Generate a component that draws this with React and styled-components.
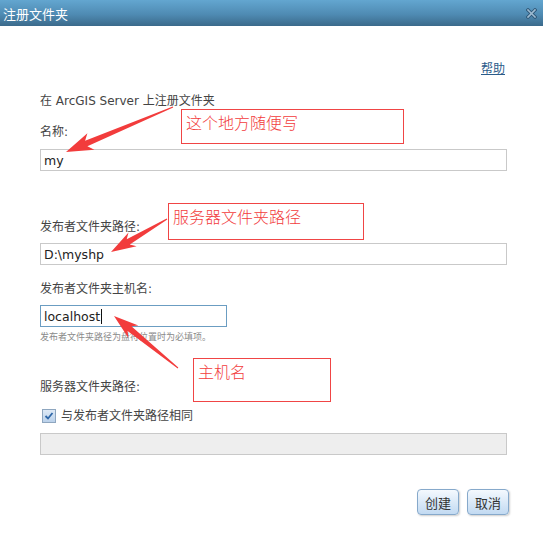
import styled, { createGlobalStyle } from "styled-components";

const GlobalStyle = createGlobalStyle`
  body {
    margin: 0;
    background: #fff;
    font-family: "DejaVu Sans", "Noto Sans CJK SC", sans-serif;
  }
`;

const Dialog = styled.div`
  position: relative;
  width: 543px;
  height: 544px;
  overflow: hidden;
  background: #fff;
`;

const TitleBar = styled.div`
  height: 26px;
  display: flex;
  align-items: center;
  justify-content: space-between;
  padding: 0 6px 0 3px;
  background: linear-gradient(#63a6d0, #4f8bb3 55%, #3b6a8b);
  color: #fff;
  font-size: 13px;
  font-family: "Noto Sans CJK SC", sans-serif;
`;

const Body = styled.div`
  display: flex;
  flex-direction: column;
  padding: 0 36px 0 40px;
`;

const HelpRow = styled.div`
  margin-top: 35px;
  display: flex;
  justify-content: flex-end;
  padding-right: 2px;
  line-height: 16px;
`;

const HelpLink = styled.a`
  font-size: 12px;
  color: #2b5c8a;
  text-decoration: underline;
`;

const Label = styled.div`
  margin-top: ${(p) => p.$top}px;
  font-size: 12px;
  line-height: 16px;
  color: #444;
`;

const Field = styled.div`
  margin-top: ${(p) => p.$top}px;
  width: ${(p) => p.$width || "100%"};
  height: 22px;
  box-sizing: border-box;
  border: 1px solid ${(p) => (p.$focused ? "#6b9dc2" : "#c9c9c9")};
  background: ${(p) => (p.$disabled ? "#eeeeee" : "#fff")};
  padding: 0 3px;
  display: flex;
  align-items: center;
  font-size: 12.5px;
  color: #222;
`;

const Caret = styled.span`
  width: 1px;
  height: 15px;
  margin-left: 1px;
  background: #111;
`;

const Hint = styled.div`
  margin-top: 4px;
  font-size: 9px;
  line-height: 12px;
  color: #8a8a8a;
`;

const CheckRow = styled.div`
  margin-top: 13px;
  display: flex;
  align-items: center;
  gap: 5px;
  padding-left: 2px;
  font-size: 12px;
  line-height: 16px;
  color: #444;
`;

const ButtonRow = styled.div`
  margin-top: 34px;
  display: flex;
  justify-content: flex-end;
  gap: 8px;
  margin-right: -2px;
`;

const Button = styled.button`
  width: 42px;
  height: 26px;
  border: 1px solid #86a9cb;
  border-radius: 4px;
  background: linear-gradient(#f4f9fe, #c2daf2);
  box-shadow: 1px 1px 2px rgba(0, 0, 0, 0.2);
  font-family: "Noto Sans CJK SC", sans-serif;
  font-size: 13px;
  color: #333;
  padding: 0;
`;

const Note = styled.div`
  position: absolute;
  left: ${(p) => p.$x}px;
  top: ${(p) => p.$y}px;
  width: ${(p) => p.$w}px;
  height: ${(p) => p.$h}px;
  box-sizing: border-box;
  border: 1px solid #f04545;
  padding: 2px 4px 0;
  color: #f23c3c;
  font-family: "Noto Sans CJK SC", sans-serif;
  font-weight: 300;
  font-size: 16px;
  line-height: 20px;
`;

const Overlay = styled.svg`
  position: absolute;
  left: 0;
  top: 0;
  pointer-events: none;
`;

const arrowPoints = ([tx, ty], [px, py], len, half) => {
  const dx = px - tx;
  const dy = py - ty;
  const d = Math.hypot(dx, dy);
  const ux = dx / d;
  const uy = dy / d;
  const nx = -uy;
  const ny = ux;
  const nk = [px - ux * len, py - uy * len];
  const bk = [px - ux * (len + 5), py - uy * (len + 5)];
  const pts = [
    [tx + nx * 0.5, ty + ny * 0.5],
    [nk[0] + nx * 3, nk[1] + ny * 3],
    [bk[0] + nx * half, bk[1] + ny * half],
    [px, py],
    [bk[0] - nx * half, bk[1] - ny * half],
    [nk[0] - nx * 3, nk[1] - ny * 3],
    [tx - nx * 0.5, ty - ny * 0.5],
  ];
  return pts.map((p) => p.map((v) => v.toFixed(1)).join(",")).join(" ");
};

const Arrows = () => (
  <Overlay width="543" height="544">
    <polygon points={arrowPoints([173, 107], [66, 152], 22, 9)} fill="#f23c3c" />
    <polygon points={arrowPoints([167, 219], [111, 252], 20, 8)} fill="#f23c3c" />
    <polygon points={arrowPoints([178, 368], [114, 316], 20, 8)} fill="#f23c3c" />
  </Overlay>
);

const CloseIcon = () => (
  <svg width="11" height="11" viewBox="0 0 11 11">
    <path d="M2 2 L9 9 M9 2 L2 9" stroke="#2f5878" strokeWidth="3.4" strokeLinecap="square" />
    <path d="M2 2 L9 9 M9 2 L2 9" stroke="#9dbbd2" strokeWidth="1.6" strokeLinecap="square" />
  </svg>
);

const CheckBox = () => (
  <svg width="14" height="14" viewBox="0 0 14 14">
    <defs>
      <linearGradient id="cb" x1="0" y1="0" x2="0" y2="1">
        <stop offset="0" stopColor="#dfeaf6" />
        <stop offset="1" stopColor="#b9d0ea" />
      </linearGradient>
    </defs>
    <rect x="0.5" y="0.5" width="13" height="13" fill="url(#cb)" stroke="#8ea6bf" />
    <path d="M3.5 7 L6 9.5 L10.5 4" fill="none" stroke="#2f67a8" strokeWidth="1.8" />
  </svg>
);

export default function App() {
  return (
    <>
      <GlobalStyle />
      <Dialog>
        <TitleBar>
          <span>注册文件夹</span>
          <CloseIcon />
        </TitleBar>
        <Body>
          <HelpRow>
            <HelpLink>帮助</HelpLink>
          </HelpRow>
          <Label $top={16}>在 ArcGIS Server 上注册文件夹</Label>
          <Label $top={15}>名称:</Label>
          <Field $top={9}>my</Field>
          <Label $top={48}>发布者文件夹路径:</Label>
          <Field $top={8}>D:\myshp</Field>
          <Label $top={16}>发布者文件夹主机名:</Label>
          <Field $top={8} $width="187px" $focused>
            localhost
            <Caret />
          </Field>
          <Hint>发布者文件夹路径为盘符位置时为必填项。</Hint>
          <Label $top={36}>服务器文件夹路径:</Label>
          <CheckRow>
            <CheckBox />
            与发布者文件夹路径相同
          </CheckRow>
          <Field $top={9} $disabled />
          <ButtonRow>
            <Button>创建</Button>
            <Button>取消</Button>
          </ButtonRow>
        </Body>
        <Note $x={181} $y={109} $w={223} $h={35}>这个地方随便写</Note>
        <Note $x={168} $y={203} $w={196} $h={37}>服务器文件夹路径</Note>
        <Note $x={193} $y={358} $w={138} $h={44}>主机名</Note>
        <Arrows />
      </Dialog>
    </>
  );
}
